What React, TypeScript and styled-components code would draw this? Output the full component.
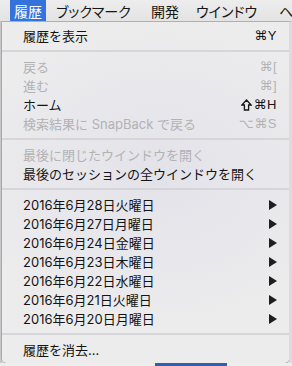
import React from "react";
import styled, { createGlobalStyle } from "styled-components";

const Global = createGlobalStyle`
  html, body { margin: 0; padding: 0; }
  body { width: 292px; height: 366px; overflow: hidden; background: #e9e9eb; }
`;

const Screen = styled.div`
  width: 292px;
  height: 366px;
  display: flex;
  flex-direction: column;
  overflow: hidden;
  background: #ececee;
`;

const MenuBar = styled.div`
  height: 22px;
  box-sizing: border-box;
  display: flex;
  align-items: stretch;
  padding-left: 10px;
  background: linear-gradient(#ededed, #e3e3e3);
  border-bottom: 1px solid #c4c4c6;
  font-family: "Inter", "Noto Sans CJK JP", sans-serif;
  font-size: 14px;
  font-feature-settings: "palt";
  overflow: hidden;
  flex: none;
`;

const BarItem = styled.div<{ $active?: boolean; $w?: number }>`
  display: flex;
  align-items: center;
  justify-content: ${(p) => (p.$active ? "center" : "flex-start")};
  box-sizing: border-box;
  width: ${(p) => (p.$w ? `${p.$w}px` : "auto")};
  padding: 0 ${(p) => (p.$active ? 4 : 10)}px;
  background: ${(p) => (p.$active ? "#3473dc" : "transparent")};
  color: ${(p) => (p.$active ? "#ffffff" : "#161616")};
  white-space: nowrap;
  overflow: hidden;
  flex: none;
`;

const Body = styled.div`
  display: flex;
  flex: none;
  height: 341px;
`;

const BehindLeft = styled.div`
  width: 2px;
  background: #c9c9cb;
  flex: none;
`;

const Panel = styled.div`
  width: 287px;
  flex: none;
  box-sizing: border-box;
  padding: 4px 0;
  display: flex;
  flex-direction: column;
  border-radius: 0 0 5px 5px;
  background: radial-gradient(ellipse 70% 45% at 55% 45%, #e2e2e9 0%, #e8e8ec 55%, #ececec 100%);
  box-shadow: 0 1px 2px rgba(0, 0, 0, 0.25), 0 0 0 0.5px rgba(0, 0, 0, 0.18);
  font-family: "Inter", "Noto Sans CJK JP", sans-serif;
  font-size: 13px;
`;

const BehindRight = styled.div`
  flex: 1;
  background: #dcdcde;
`;

const Row = styled.div<{ $disabled?: boolean }>`
  height: 19px;
  display: flex;
  align-items: center;
  padding: 0 12px 0 21px;
  color: ${(p) => (p.$disabled ? "#b2b2b4" : "#141414")};
  white-space: nowrap;
`;

const Label = styled.span`
  flex: 1;
`;

const Shortcut = styled.span`
  display: flex;
  align-items: center;
  gap: 1px;
  font-family: "Liberation Sans", "DejaVu Sans", sans-serif;
  font-size: 13px;
  letter-spacing: 0.5px;
`;

const Separator = styled.div`
  height: 12px;
  display: flex;
  align-items: center;
  &::after {
    content: "";
    flex: 1;
    height: 2px;
    background: #d6d6da;
  }
`;

const Arrow = styled.svg`
  width: 8px;
  height: 10px;
  flex: none;
`;

const ShiftIcon = styled.svg`
  width: 11px;
  height: 12px;
  flex: none;
  margin-right: 1px;
`;

const Bottom = styled.div`
  flex: 1;
  display: flex;
  background: #ededed;
`;

const BlueThing = styled.div`
  margin-left: 155px;
  width: 72px;
  background: #2f5fb3;
`;

const SubArrow = () => (
  <Arrow viewBox="0 0 8 10">
    <polygon points="0,0 8,5 0,10" fill="#1e1e1e" />
  </Arrow>
);

const Shift = () => (
  <ShiftIcon viewBox="0 0 11 12">
    <polygon
      points="5.5,1 10.2,6 7.6,6 7.6,11 3.4,11 3.4,6 0.8,6"
      fill="none"
      stroke="#141414"
      strokeWidth="1.3"
      strokeLinejoin="miter"
    />
  </ShiftIcon>
);

const dates = [
  "2016年6月28日火曜日",
  "2016年6月27日月曜日",
  "2016年6月24日金曜日",
  "2016年6月23日木曜日",
  "2016年6月22日水曜日",
  "2016年6月21日火曜日",
  "2016年6月20日月曜日",
];

export default function App() {
  return (
    <>
      <Global />
      <Screen>
        <MenuBar>
          <BarItem $active $w={36}>履歴</BarItem>
          <BarItem $w={95}>ブックマーク</BarItem>
          <BarItem $w={45}>開発</BarItem>
          <BarItem $w={83}>ウインドウ</BarItem>
          <BarItem>ヘルプ</BarItem>
        </MenuBar>
        <Body>
          <BehindLeft />
          <Panel>
            <Row>
              <Label>履歴を表示</Label>
              <Shortcut>⌘Y</Shortcut>
            </Row>
            <Separator />
            <Row $disabled>
              <Label>戻る</Label>
              <Shortcut>⌘[</Shortcut>
            </Row>
            <Row $disabled>
              <Label>進む</Label>
              <Shortcut>⌘]</Shortcut>
            </Row>
            <Row>
              <Label>ホーム</Label>
              <Shortcut>
                <Shift />⌘H
              </Shortcut>
            </Row>
            <Row $disabled>
              <Label>検索結果に SnapBack で戻る</Label>
              <Shortcut>⌥⌘S</Shortcut>
            </Row>
            <Separator />
            <Row $disabled>
              <Label>最後に閉じたウインドウを開く</Label>
            </Row>
            <Row>
              <Label>最後のセッションの全ウインドウを開く</Label>
            </Row>
            <Separator />
            {dates.map((d) => (
              <Row key={d}>
                <Label>{d}</Label>
                <SubArrow />
              </Row>
            ))}
            <Separator />
            <Row>
              <Label>履歴を消去...</Label>
            </Row>
          </Panel>
          <BehindRight />
        </Body>
        <Bottom>
          <BlueThing />
        </Bottom>
      </Screen>
    </>
  );
}
